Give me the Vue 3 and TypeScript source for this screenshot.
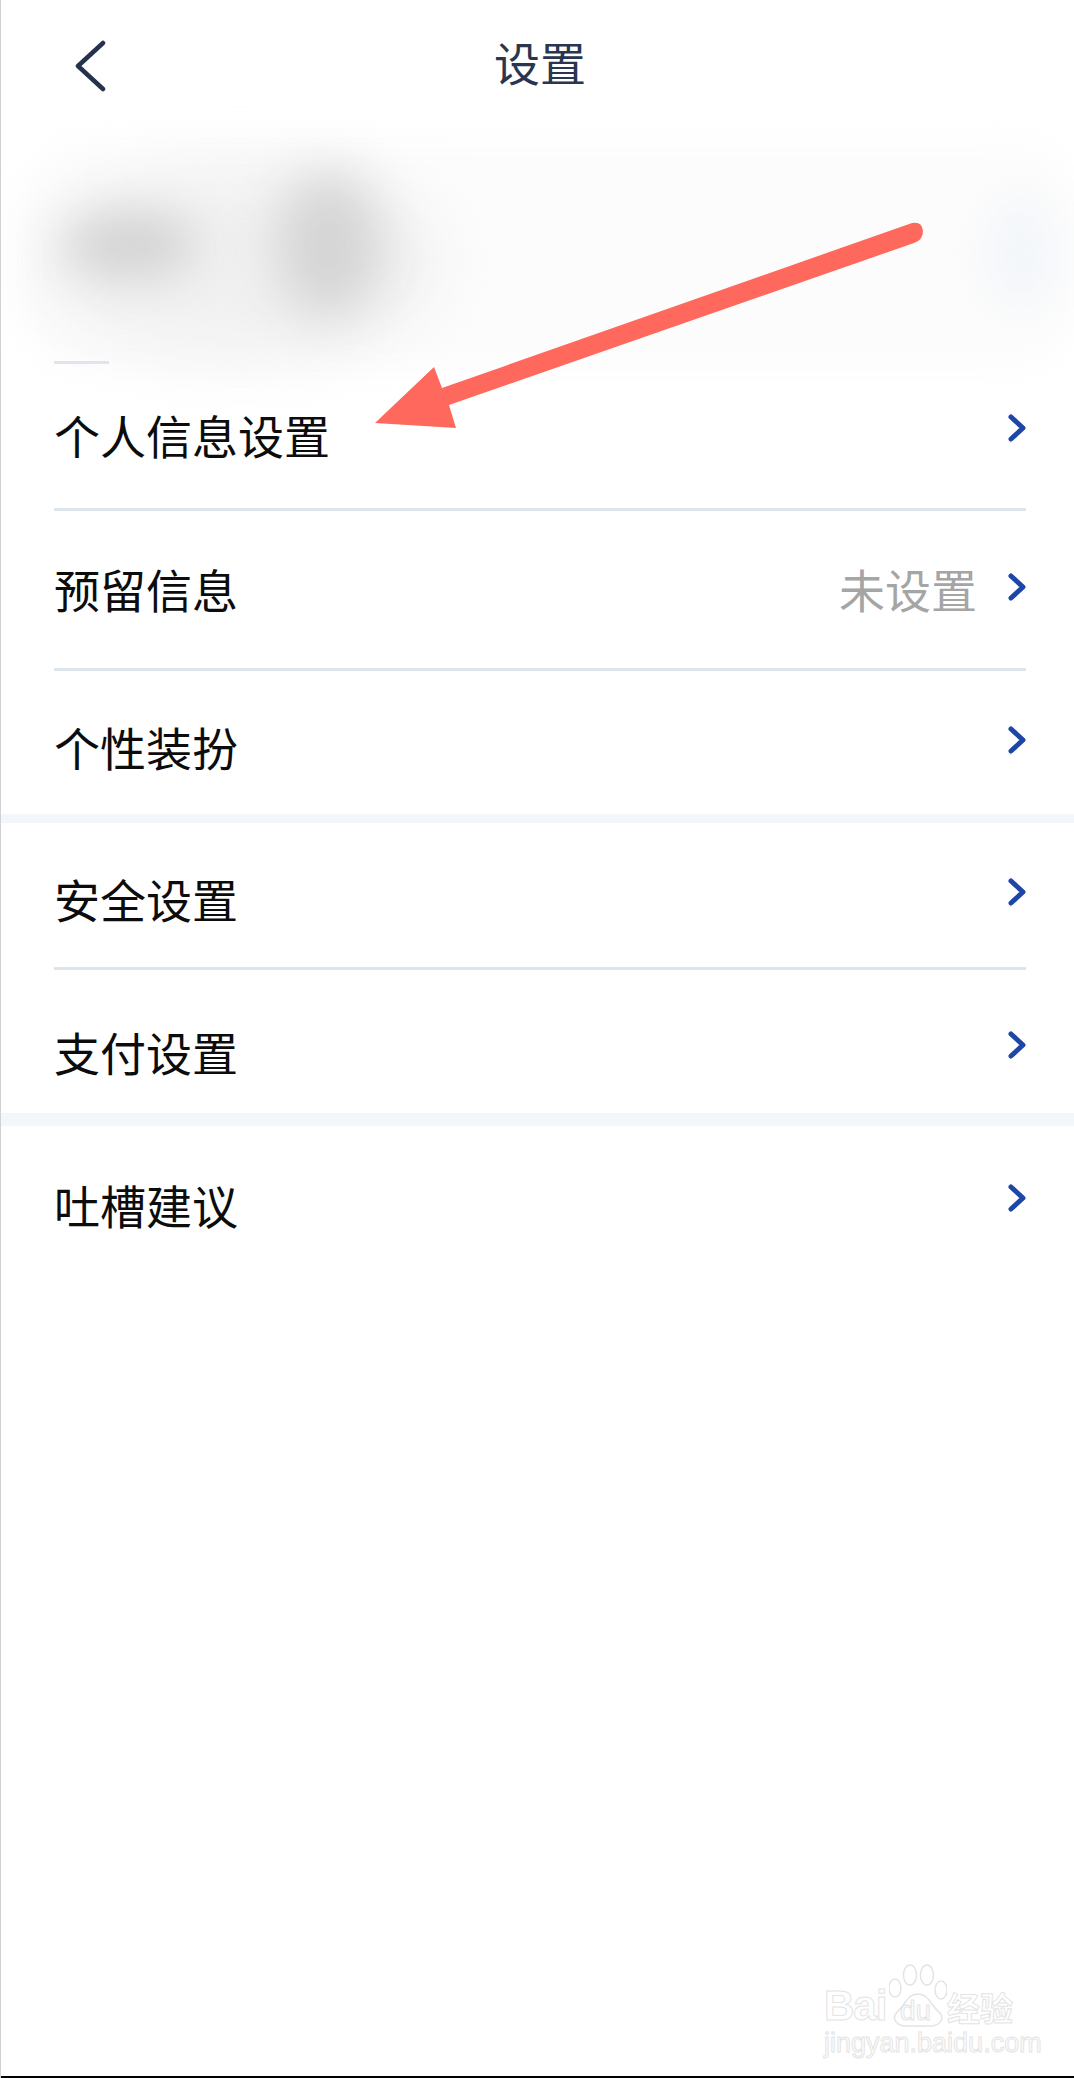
<script setup lang="ts">
interface SettingRow {
  label: string;
  value?: string;
  height: number;
  top: number;
  divided: boolean;
}

const groups: { rows: SettingRow[]; gap: number }[] = [
  {
    gap: 9,
    rows: [
      { label: '个人信息设置', height: 146, top: 39, divided: true },
      { label: '预留信息', value: '未设置', height: 160, top: 47, divided: true },
      { label: '个性装扮', height: 143, top: 45, divided: false },
    ],
  },
  {
    gap: 13,
    rows: [
      { label: '安全设置', height: 147, top: 45, divided: true },
      { label: '支付设置', height: 143, top: 51, divided: false },
    ],
  },
  {
    gap: 0,
    rows: [{ label: '吐槽建议', height: 150, top: 48, divided: false }],
  },
];
</script>

<template>
  <div class="page">
    <header class="nav">
      <svg class="back" width="32" height="52" viewBox="0 0 32 52" fill="none">
        <path d="M29 3 L4 26 L29 49" stroke="#25324d" stroke-width="4.5" stroke-linecap="round" stroke-linejoin="round" />
      </svg>
      <h1 class="title">设置</h1>
    </header>

    <section class="profile">
      <div class="smudge smudge-base"></div>
      <div class="smudge smudge-bridge"></div>
      <div class="smudge smudge-left"></div>
      <div class="smudge smudge-mid"></div>
      <div class="smudge smudge-right"></div>
      <div class="profile-line"></div>
    </section>

    <main>
      <template v-for="group in groups" :key="group.rows[0].label">
        <div
          v-for="row in group.rows"
          :key="row.label"
          class="row"
          :class="{ divided: row.divided, 'has-value': row.value }"
          :style="{ height: row.height + 'px', paddingTop: row.top + 'px' }"
        >
          <span class="label">{{ row.label }}</span>
          <span v-if="row.value" class="value">{{ row.value }}</span>
          <svg class="chevron" width="18" height="28" viewBox="0 0 18 28" fill="none">
            <path d="M3 3 L15 14 L3 25" stroke="#1e46a8" stroke-width="5" stroke-linecap="round" stroke-linejoin="round" />
          </svg>
        </div>
        <div v-if="group.gap" class="band" :style="{ height: group.gap + 'px' }"></div>
      </template>
    </main>

    <div class="bottom-bar"></div>

    <svg class="arrow" width="1074" height="520" viewBox="0 0 1074 520">
      <path d="M912 223 Q922 221 923 231 Q923 240 914 243 L449 405 L456 428 L375 423 L434 367 L442 388 Z" fill="#ff685c" />
    </svg>

    <div class="watermark">
      <div class="wm-top">
        <span class="wm-bai">Bai</span>
        <svg class="wm-paw" width="58" height="64" viewBox="0 0 58 64" fill="none" stroke="#e4e4e4" stroke-width="1.5">
          <ellipse cx="6" cy="24" rx="6" ry="9" />
          <ellipse cx="21" cy="11" rx="6.5" ry="10" />
          <ellipse cx="38" cy="11" rx="6.5" ry="10" />
          <ellipse cx="52" cy="26" rx="6" ry="9" />
          <path d="M29 30 C40 30 42 42 50 48 C57 55 50 62 41 62 L17 62 C8 62 2 55 8 48 C16 42 18 30 29 30 Z" />
        </svg>
        <span class="wm-du">du</span>
        <span class="wm-cn">经验</span>
      </div>
      <div class="wm-url">jingyan.baidu.com</div>
    </div>
  </div>
</template>

<style>
html,
body {
  margin: 0;
  background: #fff;
}
</style>

<style scoped>
.page {
  position: relative;
  width: 1074px;
  height: 2078px;
  box-sizing: border-box;
  display: flex;
  flex-direction: column;
  overflow: hidden;
  background: #fff;
  border-left: 1px solid #cfd2d6;
  font-family: "Noto Sans CJK SC", "Noto Sans", sans-serif;
}

.nav {
  position: relative;
  height: 128px;
  flex: none;
  display: flex;
  align-items: flex-start;
  justify-content: center;
  padding-top: 31px;
  box-sizing: border-box;
}

.back {
  position: absolute;
  left: 73px;
  top: 40px;
}

.title {
  margin: 0 0 0 5px;
  font-size: 46px;
  font-weight: 400;
  line-height: 60px;
  color: #2a3650;
}

.profile {
  position: relative;
  height: 237px;
  flex: none;
}

.smudge {
  position: absolute;
  border-radius: 50%;
}

.smudge-base {
  left: 20px;
  top: 14px;
  width: 1060px;
  height: 225px;
  border-radius: 70px;
  background: #fcfcfc;
  filter: blur(16px);
}

.smudge-bridge {
  left: 40px;
  top: 40px;
  width: 400px;
  height: 190px;
  background: #f1f1f1;
  filter: blur(30px);
}

.smudge-left {
  left: 62px;
  top: 84px;
  width: 135px;
  height: 66px;
  background: #d2d2d2;
  filter: blur(24px);
}

.smudge-mid {
  left: 275px;
  top: 45px;
  width: 105px;
  height: 145px;
  background: #d4d4d4;
  filter: blur(26px);
}

.smudge-right {
  left: 985px;
  top: 70px;
  width: 70px;
  height: 110px;
  background: #f3f6fa;
  filter: blur(18px);
}

.profile-line {
  position: absolute;
  left: 53px;
  top: 233px;
  width: 55px;
  height: 3px;
  background: #dfe4ee;
}

.row {
  margin: 0 48px 0 53px;
  display: flex;
  align-items: flex-start;
  box-sizing: border-box;
}

.row.divided {
  border-bottom: 3px solid #dce4ec;
}

.label {
  flex: 1;
  font-size: 46px;
  line-height: 60px;
  color: #0c0c0c;
}

.value {
  font-size: 46px;
  line-height: 60px;
  color: #a5a5a5;
  margin-right: 31px;
}

.chevron {
  flex: none;
  margin-top: 10px;
}

.has-value .chevron {
  margin-top: 15px;
}

.band {
  background: #f3f7fb;
}

.bottom-bar {
  position: absolute;
  left: -1px;
  right: 0;
  bottom: 0;
  height: 2px;
  background: #000;
}

.arrow {
  position: absolute;
  left: -1px;
  top: 0;
  pointer-events: none;
}

.watermark {
  position: absolute;
  left: 823px;
  top: 1962px;
  width: 200px;
  color: transparent;
  -webkit-text-stroke: 1px #e4e4e4;
  font-family: "Liberation Sans", sans-serif;
}

.wm-top {
  position: relative;
  height: 66px;
}

.wm-bai {
  position: absolute;
  left: 0;
  top: 21px;
  font-size: 42px;
  line-height: 46px;
  font-weight: 700;
  letter-spacing: -1px;
}

.wm-paw {
  position: absolute;
  left: 65px;
  top: 2px;
}

.wm-du {
  position: absolute;
  left: 76px;
  top: 34px;
  font-size: 28px;
  line-height: 30px;
}

.wm-cn {
  position: absolute;
  left: 123px;
  top: 26px;
  font-family: "Noto Sans CJK SC", sans-serif;
  font-size: 33px;
  line-height: 38px;
  font-weight: 700;
}

.wm-url {
  font-size: 27px;
  line-height: 30px;
}
</style>
